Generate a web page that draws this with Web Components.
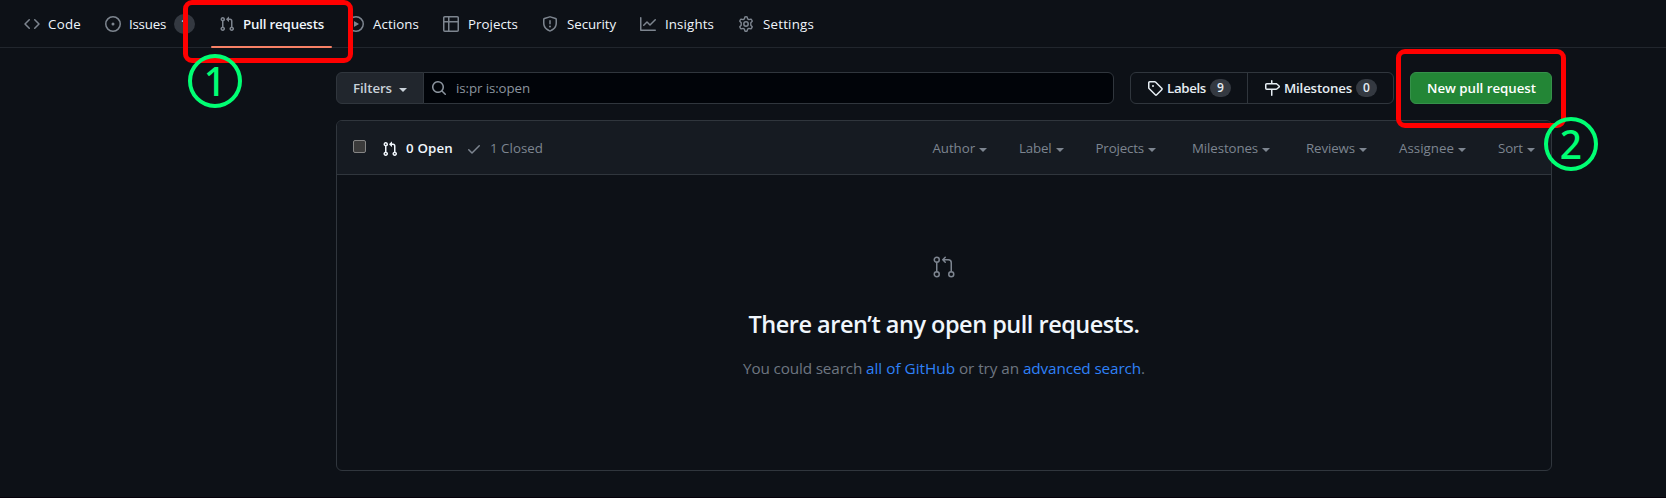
<!DOCTYPE html>
<html lang="en">
<head>
<meta charset="utf-8">
<title>Pull requests</title>
<style>
html,body{margin:0;height:100%;background:#0d1117;overflow:hidden}
body{font:14px/20px "Open Sans","Noto Sans",sans-serif;color:#c9d1d9}
</style>
</head>
<body>
<pr-page></pr-page>
<script>
const ICONS = {
code:'<path fill-rule="evenodd" d="M4.72 3.22a.75.75 0 011.06 1.06L2.06 8l3.72 3.72a.75.75 0 11-1.06 1.06L.47 8.53a.75.75 0 010-1.06l4.25-4.25zm6.56 0a.75.75 0 10-1.06 1.06L13.94 8l-3.72 3.72a.75.75 0 101.06 1.06l4.25-4.25a.75.75 0 000-1.06l-4.25-4.25z"/>',
issue:'<path d="M8 9.5a1.5 1.5 0 100-3 1.5 1.5 0 000 3z"/><path fill-rule="evenodd" d="M8 0a8 8 0 100 16A8 8 0 008 0zM1.5 8a6.5 6.5 0 1113 0 6.5 6.5 0 01-13 0z"/>',
pr:'<path fill-rule="evenodd" d="M7.177 3.073L9.573.677A.25.25 0 0110 .854v4.792a.25.25 0 01-.427.177L7.177 3.427a.25.25 0 010-.354zM3.75 2.5a.75.75 0 100 1.5.75.75 0 000-1.5zm-2.25.75a2.25 2.25 0 113 2.122v5.256a2.251 2.251 0 11-1.5 0V5.372A2.25 2.25 0 011.5 3.25zM11 2.5h-1V4h1a1 1 0 011 1v5.628a2.251 2.251 0 101.5 0V5A2.5 2.5 0 0011 2.5zm1 10.25a.75.75 0 111.5 0 .75.75 0 01-1.5 0zM3.75 12a.75.75 0 100 1.5.75.75 0 000-1.5z"/>',
play:'<path fill-rule="evenodd" d="M1.5 8a6.5 6.5 0 1113 0 6.5 6.5 0 01-13 0zM8 0a8 8 0 100 16A8 8 0 008 0zM6.379 5.227A.25.25 0 006 5.442v5.117a.25.25 0 00.379.214l4.264-2.559a.25.25 0 000-.428L6.379 5.227z"/>',
table:'<path fill-rule="evenodd" d="M0 1.75C0 .784.784 0 1.75 0h12.5C15.216 0 16 .784 16 1.75v12.5A1.75 1.75 0 0114.25 16H1.75A1.75 1.75 0 010 14.25V1.75zM1.5 6.5v7.75c0 .138.112.25.25.25H5v-8H1.5zM5 5H1.5V1.75a.25.25 0 01.25-.25H5V5zm1.5 1.5v8h7.75a.25.25 0 00.25-.25V6.5h-8zm8-1.5h-8V1.5h7.75a.25.25 0 01.25.25V5z"/>',
shield:'<path fill-rule="evenodd" d="M7.467.133a1.75 1.75 0 011.066 0l5.25 1.68A1.75 1.75 0 0115 3.48V7c0 1.566-.32 3.182-1.303 4.682-.983 1.498-2.585 2.813-5.032 3.855a1.7 1.7 0 01-1.33 0c-2.447-1.042-4.049-2.357-5.032-3.855C1.32 10.182 1 8.566 1 7V3.48a1.75 1.75 0 011.217-1.667l5.25-1.68zm.61 1.429a.25.25 0 00-.153 0l-5.25 1.68a.25.25 0 00-.174.238V7c0 1.358.275 2.666 1.057 3.86.784 1.194 2.121 2.34 4.366 3.297a.2.2 0 00.154 0c2.245-.956 3.582-2.104 4.366-3.298C13.225 9.666 13.5 8.36 13.5 7V3.48a.25.25 0 00-.174-.237l-5.25-1.68zM9 10.5a1 1 0 11-2 0 1 1 0 012 0zm-.25-5.75a.75.75 0 10-1.5 0v3a.75.75 0 001.5 0v-3z"/>',
graph:'<path fill-rule="evenodd" d="M1.5 1.75a.75.75 0 00-1.5 0v12.5c0 .414.336.75.75.75h14.5a.75.75 0 000-1.5H1.5V1.75zm14.28 2.53a.75.75 0 00-1.06-1.06L10 7.94 7.53 5.47a.75.75 0 00-1.06 0L3.22 8.72a.75.75 0 001.06 1.06L7 7.06l2.47 2.47a.75.75 0 001.06 0l5.25-5.25z"/>',
gear:'<path fill="none" stroke="currentColor" stroke-width="1.4" stroke-linejoin="round" d="M6.9 .9Q8 .6 9.1 .9L9.6 2.9 10.9 3.65 12.9 3.1Q14 4.1 14.2 5.2L12.8 6.7V9.3L14.2 10.8Q14 11.9 12.9 12.9L10.9 12.35 9.6 13.1 9.1 15.1Q8 15.4 6.9 15.1L6.4 13.1 5.1 12.35 3.1 12.9Q2 11.9 1.8 10.8L3.2 9.3V6.7L1.8 5.2Q2 4.1 3.1 3.1L5.1 3.65 6.4 2.9Z"/><circle cx="8" cy="8" r="2.2" fill="none" stroke="currentColor" stroke-width="1.5"/>',
search:'<path fill-rule="evenodd" d="M11.5 7a4.499 4.499 0 11-8.998 0A4.499 4.499 0 0111.5 7zm-.82 4.74a6 6 0 111.06-1.06l3.04 3.04a.75.75 0 11-1.06 1.06l-3.04-3.04z"/>',
tag:'<path fill-rule="evenodd" d="M2.5 7.775V2.75a.25.25 0 01.25-.25h5.025a.25.25 0 01.177.073l6.25 6.25a.25.25 0 010 .354l-5.025 5.025a.25.25 0 01-.354 0l-6.25-6.25a.25.25 0 01-.073-.177zm-1.5 0V2.75C1 1.784 1.784 1 2.75 1h5.025c.464 0 .91.184 1.238.513l6.25 6.25a1.75 1.75 0 010 2.474l-5.026 5.026a1.75 1.75 0 01-2.474 0l-6.25-6.25A1.75 1.75 0 011 7.775zM6 5a1 1 0 100 2 1 1 0 000-2z"/>',
milestone:'<path fill-rule="evenodd" d="M7.75 0a.75.75 0 01.75.75V3h3.634c.414 0 .814.147 1.13.414l2.07 1.75a1.75 1.75 0 010 2.672l-2.07 1.75a1.75 1.75 0 01-1.13.414H8.5v5.25a.75.75 0 11-1.5 0V10H2.75A1.75 1.75 0 011 8.25v-3.5C1 3.784 1.784 3 2.75 3H7V.75A.75.75 0 017.75 0zm0 8.5h4.384a.25.25 0 00.161-.06l2.07-1.75a.25.25 0 000-.38l-2.07-1.75a.25.25 0 00-.161-.06H2.75a.25.25 0 00-.25.25v3.5c0 .138.112.25.25.25h5z"/>',
check:'<path fill-rule="evenodd" d="M13.78 4.22a.75.75 0 010 1.06l-7.25 7.25a.75.75 0 01-1.06 0L2.22 9.28a.75.75 0 011.06-1.06L6 10.94l6.72-6.72a.75.75 0 011.06 0z"/>',
pr24:'<g fill="none" stroke="currentColor" stroke-width="1.5" stroke-linecap="round" stroke-linejoin="round"><circle cx="4.75" cy="4.75" r="2.5"/><circle cx="4.75" cy="19.25" r="2.5"/><circle cx="19.25" cy="19.25" r="2.5"/><path d="M4.75 7.25v9.5M19.25 16.75V7.75a3 3 0 0 0-3-3h-5.5M13.25 2.25L10.75 4.75l2.5 2.5"/></g>'
};
const define = (name, html, init) => customElements.define(name, class extends HTMLElement {
  connectedCallback() {
    if (this.shadowRoot) return;
    const root = this.attachShadow({mode:'open'});
    root.innerHTML = html;
    if (init) init.call(this, root);
  }
});

define('oct-icon', '<style>:host{display:block;flex:none;width:var(--s,16px);height:var(--s,16px)}svg{display:block;width:100%;height:100%;fill:currentColor}</style>', function(root) {
  const n = this.getAttribute('name'), v = n === 'pr24' ? 24 : 16;
  root.innerHTML += `<svg viewBox="0 0 ${v} ${v}">${ICONS[n]}</svg>`;
});

/* Text run that tracks its letters to fill the width given in "w". */
define('fit-text', '<style>:host{display:block;flex:none;white-space:nowrap}span{display:inline-block}</style><span><slot></slot></span>', function(root) {
  const w = +this.getAttribute('w'), s = root.querySelector('span');
  const natural = s.getBoundingClientRect().width;
  s.style.letterSpacing = (w - natural) / this.textContent.length + 'px';
  this.style.width = w + 'px';
});

define('count-badge', '<style>:host{display:block;flex:none;box-sizing:border-box;width:21px;height:18px;border-radius:10px;background:#343941;color:#e6edf3;font-size:12px;font-weight:600;line-height:18px;text-align:center}</style><slot></slot>');

define('nav-tab', `<style>
:host{display:flex;align-items:center;gap:8px;height:48px;position:relative;color:#f0f6fc;font-size:13.3px}
oct-icon{color:#7d858f}
:host([selected]){font-weight:600}
:host([selected])::after{content:"";position:absolute;left:-8px;right:-8px;bottom:0;height:2px;background:#f78166;border-radius:1px}
</style><oct-icon></oct-icon><slot></slot>`, function(root) {
  const i = document.createElement('oct-icon');
  i.setAttribute('name', this.getAttribute('icon'));
  root.querySelector('oct-icon').replaceWith(i);
});

define('repo-nav', `<style>
:host{display:flex;box-sizing:border-box;gap:24px;height:48px;padding-left:24px;border-bottom:1px solid #21262d}
count-badge{height:20px;line-height:20px}
.in{margin-left:1px}
</style>
<nav-tab icon="code"><fit-text w="33">Code</fit-text></nav-tab>
<nav-tab icon="issue"><fit-text w="37">Issues</fit-text><count-badge>1</count-badge></nav-tab>
<nav-tab icon="pr" selected><fit-text w="81">Pull requests</fit-text></nav-tab>
<nav-tab icon="play"><fit-text class="in" w="46">Actions</fit-text></nav-tab>
<nav-tab icon="table"><fit-text class="in" w="50">Projects</fit-text></nav-tab>
<nav-tab icon="shield"><fit-text class="in" w="49">Security</fit-text></nav-tab>
<nav-tab icon="graph"><fit-text class="in" w="49">Insights</fit-text></nav-tab>
<nav-tab icon="gear"><fit-text class="in" w="51">Settings</fit-text></nav-tab>`);

define('drop-caret', '<style>:host{display:block;flex:none;border:4px solid transparent;border-top-color:currentColor;border-bottom:0;margin-top:4px}</style>');

define('tool-bar', `<style>
:host{display:flex;height:32px;font-size:13.3px}
div{box-sizing:border-box;display:flex;align-items:center;border:1px solid #30363d;height:32px}
.filters{width:88px;padding-left:16px;gap:7px;background:#21262d;border-radius:6px 0 0 6px;font-weight:600;color:#c9d1d9}
.search{width:691px;margin-left:-1px;padding-left:7px;gap:9px;background:#010409;border-radius:0 6px 6px 0;color:#8b949e}
.links{width:264px;margin-left:16px;border-radius:6px;font-weight:600;color:#e6edf3}
.links span{display:flex;align-items:center;gap:4px;height:100%;padding-left:16px;box-sizing:border-box}
.links span:first-child{width:117px;border-right:1px solid #30363d}
.new{width:142px;margin-left:16px;padding-left:1px;justify-content:center;background:#238636;border-color:#35914a;border-radius:6px;font-weight:600;color:#fff}
</style>
<div class="filters"><fit-text w="39">Filters</fit-text><drop-caret></drop-caret></div>
<div class="search"><oct-icon name="search"></oct-icon><fit-text w="74">is:pr is:open</fit-text></div>
<div class="links"><span><oct-icon name="tag"></oct-icon><fit-text w="39">Labels</fit-text><count-badge>9</count-badge></span><span><oct-icon name="milestone"></oct-icon><fit-text w="68">Milestones</fit-text><count-badge>0</count-badge></span></div>
<div class="new"><fit-text w="109">New pull request</fit-text></div>`);

define('filter-menu', '<style>:host{display:flex;align-items:center;gap:4px;color:#7d8590}</style><slot></slot><drop-caret></drop-caret>');

define('list-head', `<style>
:host{display:flex;box-sizing:border-box;align-items:center;height:54px;padding:0 16px;background:#161b22;border-bottom:1px solid #30363d;border-radius:5px 5px 0 0;font-size:13.3px;color:#7d8590}
i{box-sizing:border-box;width:13px;height:13px;border:1px solid #858585;border-radius:2px;background:#3b3b3b;margin:-2px 16px 0 0}
oct-icon{margin-top:2px}
.open{font-weight:600;color:#f0f6fc;margin:0 13px 0 8px}
.closed{margin-left:8px}
.menus{display:flex;gap:32px;margin-left:auto}
.wide{margin:0 4px}
</style>
<i></i><oct-icon name="pr" style="color:#f0f6fc"></oct-icon><fit-text class="open" w="47">0 Open</fit-text>
<oct-icon name="check"></oct-icon><fit-text class="closed" w="53">1 Closed</fit-text>
<div class="menus">
<filter-menu><fit-text w="42.5">Author</fit-text></filter-menu>
<filter-menu><fit-text w="32.5">Label</fit-text></filter-menu>
<filter-menu><fit-text w="48.5">Projects</fit-text></filter-menu>
<filter-menu class="wide"><fit-text w="66">Milestones</fit-text></filter-menu>
<filter-menu><fit-text w="49">Reviews</fit-text></filter-menu>
<filter-menu><fit-text w="55">Assignee</fit-text></filter-menu>
<filter-menu><fit-text w="25">Sort</fit-text></filter-menu>
</div>`);

define('empty-state', `<style>
:host{display:flex;flex-direction:column;align-items:center;padding-top:80px}
oct-icon{--s:24px;color:#7d8590}
.title{margin-top:27px;font-size:23.5px;line-height:36px;font-weight:600;color:#f0f6fc}
p{display:flex;margin:14px 0 0;font-size:15.3px;line-height:24px;color:#6e7681}
.link{color:#2f81f7}
</style>
<oct-icon name="pr24"></oct-icon>
<fit-text class="title" w="391">There aren’t any open pull requests.</fit-text>
<p><fit-text w="123">You could search&nbsp;</fit-text><fit-text class="link" w="89">all of GitHub</fit-text><fit-text w="68">&nbsp;or try an&nbsp;</fit-text><fit-text class="link" w="118">advanced search</fit-text><fit-text w="4">.</fit-text></p>`);

/* Annotation overlays: a red frame and a numbered green ring. */
define('mark-frame', '<style>:host{position:absolute;box-sizing:border-box;border:5px solid #f00;border-radius:9px}</style>');
define('mark-number', '<style>:host{position:absolute;box-sizing:border-box;width:54px;height:54px;border:4px solid #00ff73;border-radius:50%;color:#00ff73;font:500 39px/46px "Noto Sans","Open Sans",sans-serif;text-align:center}</style><slot></slot>');

define('pr-page', `<style>
:host{display:block;position:relative;box-sizing:border-box;height:498px;background:#0d1117;border-bottom:1px solid #05010a}
main{width:1216px;margin:24px 0 0 336px}
section{box-sizing:border-box;height:351px;margin-top:16px;border:1px solid #30363d;border-radius:6px}
</style>
<repo-nav></repo-nav>
<main><tool-bar></tool-bar><section><list-head></list-head><empty-state></empty-state></section></main>
<mark-frame style="left:183px;top:0;width:170px;height:63px"></mark-frame>
<mark-frame style="left:1396px;top:49px;width:170px;height:79px"></mark-frame>
<mark-number style="left:188px;top:54px">1</mark-number>
<mark-number style="left:1544px;top:117px">2</mark-number>`);
</script>
</body>
</html>
